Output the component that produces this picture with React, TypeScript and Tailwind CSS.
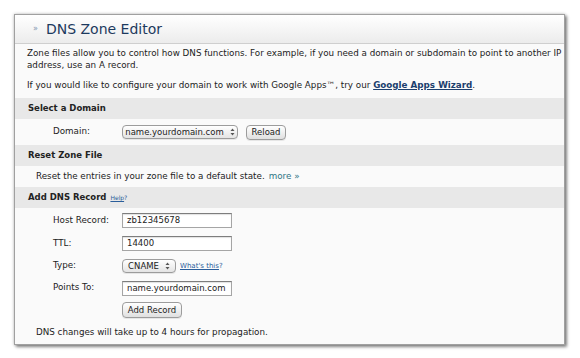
import React from "react";

function Arrows() {
  return (
    <svg width="5" height="8" viewBox="0 0 5 8" className="ml-[6px]">
      <path d="M2.5 0.5 L4.5 3 L0.5 3 Z" fill="#555" />
      <path d="M2.5 7.5 L4.5 5 L0.5 5 Z" fill="#555" />
    </svg>
  );
}

function Select({ value, className }: { value: string; className: string }) {
  return (
    <div
      className={`flex h-[14px] items-center justify-center rounded-[4px] border border-[#9c9c9c] bg-gradient-to-b from-white to-[#e4e4e4] text-[8.5px] text-[#222] shadow-[0_1px_0_rgba(0,0,0,0.08)] ${className}`}
    >
      <span>{value}</span>
      <Arrows />
    </div>
  );
}

function Button({ label, className }: { label: string; className: string }) {
  return (
    <div
      className={`flex h-[15px] items-center justify-center rounded-[4px] border border-[#9c9c9c] bg-gradient-to-b from-white to-[#e0e0e0] text-[8.5px] text-[#222] shadow-[0_1px_0_rgba(0,0,0,0.08)] ${className}`}
    >
      {label}
    </div>
  );
}

function Input({ value }: { value: string }) {
  return (
    <div className="flex h-[15px] w-[110px] items-center border border-[#a5a5a5] border-t-[#7d7d7d] bg-white pl-[4px] text-[8.5px] text-[#222] shadow-[inset_0_1px_1px_rgba(0,0,0,0.12)]">
      {value}
    </div>
  );
}

function Band({ children }: { children: React.ReactNode }) {
  return (
    <div className="flex h-[21px] items-center bg-[#e8e8e8] pl-[13px] text-[8.5px] font-bold text-[#222]">
      {children}
    </div>
  );
}

function FormRow({ label, h, children }: { label: string; h: string; children: React.ReactNode }) {
  return (
    <div className={`flex items-center pl-[38px] ${h}`}>
      <span className="w-[69px] text-[8.75px] text-[#222]">{label}</span>
      {children}
    </div>
  );
}

export default function App() {
  return (
    <div className="min-h-screen bg-white pl-[14px] pt-[14px] font-['DejaVu_Sans',Verdana,sans-serif]">
      <div className="w-[551px] border border-[#a0a0a0] bg-[#fafafa] shadow-[0_0_3px_rgba(0,0,0,0.25),2px_2px_3px_rgba(0,0,0,0.45)]">
        {/* title bar */}
        <div className="flex h-[29px] items-center border-b border-[#cfcfcf] bg-gradient-to-b from-white to-[#ececec] pl-[18px]">
          <span className="mr-[8px] text-[8px] text-[#8095b0]">»</span>
          <h1 className="text-[14px] text-[#1d3a5e]">DNS Zone Editor</h1>
        </div>

        <div className="pl-[12px] pt-[3px] text-[8.75px] leading-[12px] text-[#222]">
          <p>
            Zone files allow you to control how DNS functions. For example, if you need a domain or subdomain to point to
            another IP address, use an A record.
          </p>
          <p className="mt-[8px]">
            If you would like to configure your domain to work with Google Apps™, try our{" "}
            <a className="font-bold text-[#1c3f6e] underline">Google Apps Wizard</a>.
          </p>
        </div>

        <div className="mt-[7px]">
          <Band>Select a Domain</Band>
          <FormRow label="Domain:" h="h-[26px]">
            <Select value="name.yourdomain.com" className="w-[116px]" />
            <Button label="Reload" className="ml-[8px] w-[40px]" />
          </FormRow>

          <Band>Reset Zone File</Band>
          <div className="flex h-[21px] items-center pl-[21px] text-[8.75px] text-[#222]">
            Reset the entries in your zone file to a default state.
            <a className="ml-[4px] text-[#2f7584]">more »</a>
          </div>

          <Band>
            Add DNS Record
            <a className="ml-[4px] text-[6px] font-normal text-[#2a5d9a] underline">Help</a>
            <span className="text-[6px] font-normal text-[#2a5d9a]">?</span>
          </Band>

          <div className="pt-[1px]">
            <FormRow label="Host Record:" h="h-[23px]">
              <Input value="zb12345678" />
            </FormRow>
            <FormRow label="TTL:" h="h-[23px]">
              <Input value="14400" />
            </FormRow>
            <FormRow label="Type:" h="h-[22px]">
              <Select value="CNAME" className="w-[54px]" />
              <a className="ml-[4px] text-[7px] text-[#2a5d9a] underline">What's this</a>
              <span className="text-[7px] text-[#2a5d9a]">?</span>
            </FormRow>
            <FormRow label="Points To:" h="h-[22px]">
              <Input value="name.yourdomain.com" />
            </FormRow>
            <FormRow label="" h="h-[22px]">
              <Button label="Add Record" className="h-[16px] w-[60px]" />
            </FormRow>
          </div>

          <div className="flex h-[23px] items-center pl-[21px] text-[8.75px] text-[#222]">
            DNS changes will take up to 4 hours for propagation.
          </div>
        </div>
      </div>
    </div>
  );
}
